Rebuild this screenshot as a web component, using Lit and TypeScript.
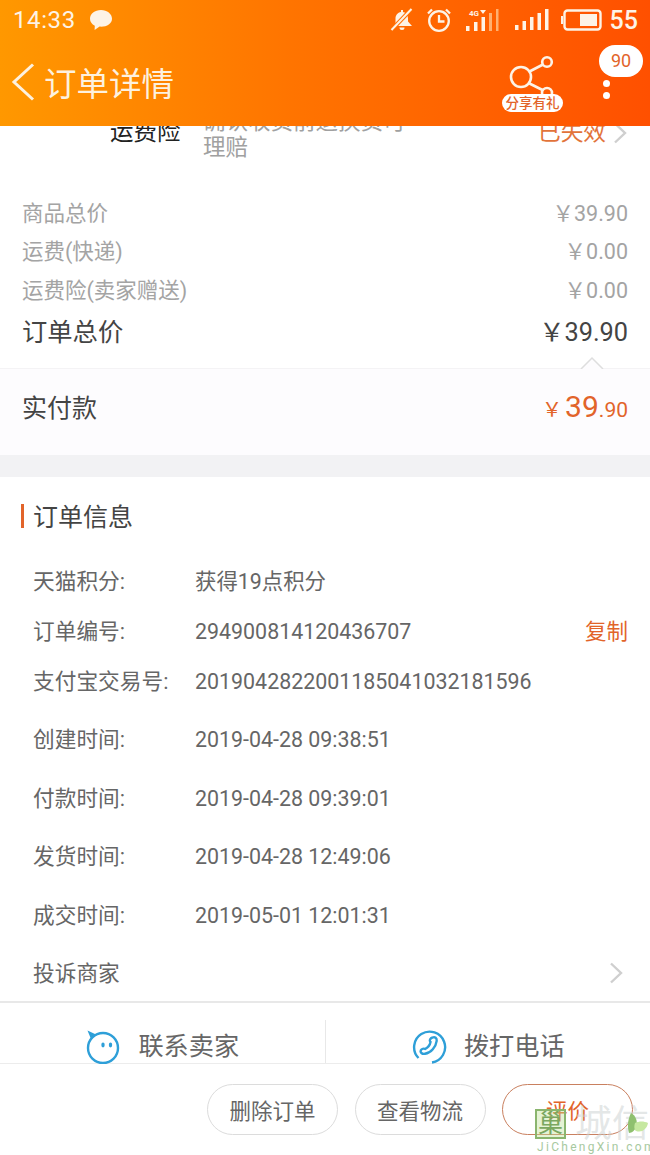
import { LitElement, html, css } from "lit";
import { customElement } from "lit/decorators.js";

const priceRows = [
  ["商品总价", "39.90"],
  ["运费(快递)", "0.00"],
  ["运费险(卖家赠送)", "0.00"],
];
const info = [
  ["天猫积分:", "获得19点积分", 50],
  ["订单编号:", "294900814120436707", 50],
  ["支付宝交易号:", "2019042822001185041032181596", 58],
  ["创建时间:", "2019-04-28 09:38:51", 59],
  ["付款时间:", "2019-04-28 09:39:01", 58],
  ["发货时间:", "2019-04-28 12:49:06", 59],
  ["成交时间:", "2019-05-01 12:01:31", 58],
];

@customElement("app-root")
export class AppRoot extends LitElement {
  static styles = css`
    :host { display: block; width: 650px; height: 1155px; font-family: Roboto, "Noto Sans CJK SC", sans-serif; background: #fff; overflow: hidden; position: relative; }
    .page { display: flex; flex-direction: column; height: 1155px; }
    header { height: 126px; flex: none; background: linear-gradient(90deg, #ff9800 0%, #ff7400 45%, #ff5000 100%); color: #fff; display: flex; flex-direction: column; position: relative; z-index: 1; }
    .status { height: 40px; display: flex; align-items: center; padding: 0 12px 0 13px; font-size: 24px; color: #fdf3e6; }
    .status .time { letter-spacing: .6px; }
    .status .bubble { margin-left: 13px; }
    .status .right { margin-left: auto; display: flex; align-items: center; }
    .status .batt { margin-left: 8px; font-size: 25px; font-weight: 500; }
    .nav { flex: 1; display: flex; align-items: flex-start; position: relative; padding-left: 11px; }
    .nav .back { margin-top: 23px; }
    .nav .title { font-size: 32.5px; line-height: 44px; margin-top: 23px; margin-left: 9px; color: #fdf1df; }
    .share { position: absolute; left: 502px; top: 15px; width: 62px; height: 58px; }
    .share .tag { position: absolute; left: 0; top: 39px; width: 61px; height: 18px; background: #fff; border-radius: 9px; color: #e2642a; font-size: 13.5px; line-height: 18px; text-align: center; white-space: nowrap; font-weight: 500; }
    .dots { position: absolute; left: 603px; top: 40px; display: flex; flex-direction: column; gap: 5px; }
    .dots i { width: 7px; height: 7px; background: #fff; border-radius: 50%; display: block; }
    .badge { position: absolute; left: 599px; top: 5px; width: 44px; height: 32px; background: #fff; border-radius: 16px; color: #e2642a; font-size: 18px; line-height: 32px; text-align: center; }
    main { flex: 1; overflow: hidden; min-height: 0; }
    .ins { height: 52px; margin-top: -15px; display: flex; align-items: flex-start; padding-left: 110px; position: relative; }
    .ins .k { color: #222; width: 93px; flex: none; padding-top: 8px; font-size: 23.5px; line-height: 27px; }
    .ins .v { color: #a0a0a0; width: 335px; flex: none; font-size: 22.5px; line-height: 26px; margin-top: -3px; white-space: nowrap; }
    .ins .s { color: #e2733a; padding-top: 8px; flex: none; white-space: nowrap; font-size: 22.700px; line-height: 27px; }
    .ins svg { margin-top: 11px; margin-left: 7px; flex: none; }
    .prices { padding: 29px 22px 0; }
    .pr { height: 38.5px; display: flex; justify-content: space-between; align-items: center; color: #a4a4a4; font-size: 21.500px; }
    .total { height: 46px; display: flex; justify-content: space-between; align-items: center; font-size: 25.300px; color: #444; margin-top: -1px; }
    .paidwrap { margin-top: 15.5px; height: 87px; background: #fdfcfe; border-top: 1px solid #f4f3f5; box-sizing: border-box; padding: 0 22px 12px; display: flex; justify-content: space-between; align-items: center; position: relative; font-size: 25px; color: #444; }
    .caret { position: absolute; left: 580px; top: -13px; width: 24px; height: 13px; overflow: hidden; }
    .caret svg { display: block; }
    .paid { color: #e2642a; display: flex; align-items: baseline; }
    .paid .y { font-size: 20px; margin-right: 3px; }
    .paid .b { font-size: 30px; }
    .paid .c { font-size: 21px; }
    .gap { height: 22px; background: #f2f2f4; }
    .heading { height: 75px; margin-left: 21px; display: flex; align-items: center; font-size: 25px; color: #444; }
    .heading::before { content: ""; width: 3px; height: 24px; background: #e2642a; margin: 3px 9px 0 0; }
    .info { padding: 14px 22px 0 33px; }
    .row { display: flex; align-items: flex-start; color: #666; }
    .row .l { width: 162px; font-size: 21.700px; line-height: 31px; }
    .row .val { font-size: 21.400px; line-height: 32px; }
    .row .val.cn { line-height: 31px; }
    .row .copy { margin-left: auto; color: #e2642a; font-size: 21.500px; line-height: 31px; }
    .complain { height: 45px; display: flex; align-items: flex-start; justify-content: space-between; font-size: 21.700px; line-height: 32px; color: #666; padding: 0 27px 0 33px; border-bottom: 2px solid #e8e8e8; box-sizing: border-box; }
    .complain svg { margin-top: 4px; }
    .contact { flex: none; height: 61px; display: flex; border-bottom: 1px solid #ececec; box-sizing: border-box; }
    .contact > div { flex: 1; display: flex; align-items: center; justify-content: center; gap: 17px; font-size: 25.200px; color: #666; padding-top: 28px; }
    .contact > div span { line-height: 1; }
    .contact .sep { flex: none; width: 1px; background: #e8e8e8; margin-top: 17px; padding: 0; }
    footer { flex: none; height: 91px; box-sizing: border-box; display: flex; justify-content: flex-end; gap: 16.5px; padding: 20px 17px 0 0; background: #fff; }
    .btn { width: 131px; height: 51px; box-sizing: border-box; border: 1px solid #dcdcdc; border-radius: 26px; display: flex; align-items: center; justify-content: center; font-size: 21.500px; color: #666; }
    .btn.hot { border-color: #c9805f; color: #e2642a; }
    .wm { position: absolute; left: 535px; top: 1105px; width: 115px; height: 50px; pointer-events: none; }
    .wm .box { position: absolute; left: 0; top: 4px; width: 31px; height: 30px; box-sizing: border-box; border: 2px solid #8ab56e; background: rgba(190, 225, 150, .4); color: #7aa860; font-size: 25px; line-height: 26px; text-align: center; overflow: hidden; }
    .wm .cn { position: absolute; left: 40px; top: 0; color: rgba(205, 210, 210, .55); font-size: 37px; line-height: 40px; white-space: nowrap; }
    .wm .en { position: absolute; left: 2px; top: 35px; color: #a7c9a0; font-size: 12px; letter-spacing: 2.300px; white-space: nowrap; line-height: 14px; }
    .wm .leaf { position: absolute; left: 92px; top: 8px; }
  `;

  render() {
    const chevron = html`<svg width="14" height="22" viewBox="0 0 14 22" fill="none" stroke="#cfcfcf" stroke-width="2.4"><path d="M2 1.5 12 11 2 20.5"/></svg>`;
    return html`<div class="page">
      <header>
        <div class="status">
          <span class="time">14:33</span>
          <svg class="bubble" width="24" height="22" viewBox="0 0 24 22"><path fill="#fdf3e6" d="M12 1C5.800 1 1 4.900 1 9.700c0 3 1.900 5.600 4.800 7.100L5.600 21l5-3.400c.5 0 .9.100 1.400.100 6.200 0 11-3.300 11-8S18.200 1 12 1z"/></svg>
          <div class="right">
            <svg width="24" height="24" viewBox="0 0 24 24" fill="#fdf3e6"><path d="M11 2h2v2.100c3.400.6 5 3.200 5 6.400v3L22 18H3.500l2-3v-4.500C5.500 7.300 7.600 4.700 11 4.100z"/><path d="M9.500 19.500h5a2.500 2.500 0 0 1-5 0z"/><path d="M21.500 1 1.500 22" stroke="#ff7000" stroke-width="4"/><path d="M21.500 1 1.500 22" stroke="#fdf3e6" stroke-width="2"/></svg>
            <svg style="margin-left:12px" width="26" height="26" viewBox="0 0 26 26" fill="none" stroke="#fdf3e6" stroke-width="2.300"><circle cx="13" cy="14" r="9.800"/><path d="M13 8v6.500h5.500M2 6.500 6 2.500M24 6.500l-4-4"/></svg>
            <svg style="margin-left:13px" width="34" height="24" viewBox="0 0 34 24"><text x="4" y="7.500" fill="#fdf3e6" font-size="8" font-family="Roboto" font-weight="700">4G</text><path fill="#fdf3e6" d="M15 2h6l-3 4z"/><g fill="#fdf3e6"><rect x="1" y="18" width="3.500" height="5"/><rect x="9" y="14" width="3.500" height="9"/><rect x="16.500" y="9" width="3.500" height="14"/></g><g fill="#ffb070"><rect x="24" y="5" width="3" height="18"/><rect x="31" y="1" width="2.500" height="22"/></g></svg>
            <svg style="margin-left:16px" width="34" height="22" viewBox="0 0 34 22" fill="#fdf3e6"><rect x="0" y="16" width="3.500" height="5"/><rect x="7.500" y="12" width="3.500" height="9"/><rect x="15" y="8" width="3.500" height="13"/><rect x="22.500" y="4" width="3.500" height="17"/><rect x="30" y="0" width="3.500" height="21"/></svg>
            <svg style="margin-left:12px" width="41" height="22" viewBox="0 0 41 22" fill="none"><rect x="3.500" y="1.500" width="36" height="19" rx="3" stroke="#fdf3e6" stroke-width="2.400"/><rect x="0" y="7" width="2" height="8" fill="#fdf3e6"/><rect x="19" y="5" width="17" height="12" fill="#fdf3e6"/></svg>
            <span class="batt">55</span>
          </div>
        </div>
        <div class="nav">
          <svg class="back" width="24" height="38" viewBox="0 0 24 38" fill="none" stroke="#fdf1df" stroke-width="3"><path d="M22 1.500 3 19l19 17.500"/></svg>
          <span class="title">订单详情</span>
          <div class="share">
            <svg width="62" height="44" viewBox="0 0 62 44" fill="none" stroke="#fdf3e6" stroke-width="2.600"><circle cx="19" cy="22" r="10"/><circle cx="45" cy="7" r="4.800"/><circle cx="45" cy="38" r="5"/><path d="M27.500 16.500 41 9.500M27.500 28.500 40.500 35"/></svg>
            <span class="tag">分享有礼</span>
          </div>
          <div class="dots"><i></i><i></i></div>
          <div class="badge">90</div>
        </div>
      </header>
      <main>
        <div class="ins">
          <span class="k">运费险</span>
          <span class="v">确认收货前退换货可<br />理赔</span>
          <span class="s">已失效</span>
          ${chevron}
        </div>
        <div class="prices">
          ${priceRows.map(([k, v]) => html`<div class="pr"><span>${k}</span><span>￥${v}</span></div>`)}
          <div class="total"><span>订单总价</span><span>￥39.90</span></div>
        </div>
        <div class="paidwrap">
          <div class="caret"><svg width="24" height="13" viewBox="0 0 24 13" fill="#fdfcfe" stroke="#dedede" stroke-width="1.500"><path d="M1 13 12 2l11 11"/></svg></div>
          <span>实付款</span>
          <span class="paid"><span class="y">￥</span><span class="b">39</span><span class="c">.90</span></span>
        </div>
        <div class="gap"></div>
        <div class="heading">订单信息</div>
        <div class="info">
          ${info.map(([l, v, h], i) => html`<div class="row" style="height:${h}px"><span class="l">${l}</span><span class="val ${i === 0 ? "cn" : ""}">${v}</span>${i === 1 ? html`<span class="copy">复制</span>` : ""}</div>`)}
        </div>
        <div class="complain"><span>投诉商家</span>${chevron}</div>
      </main>
      <div class="contact">
        <div>
          <svg width="36" height="36" viewBox="0 0 36 36" fill="none" stroke="#2e9fd8" stroke-width="2.400"><circle cx="18" cy="19" r="15"/><path fill="#2e9fd8" stroke="none" d="M2.500 1.500 11 5.500 6 10z"/><ellipse cx="18" cy="16" rx="1.700" ry="2.400" fill="#2e9fd8" stroke="none"/><ellipse cx="25.500" cy="16" rx="1.700" ry="2.400" fill="#2e9fd8" stroke="none"/></svg>
          <span>联系卖家</span>
        </div>
        <div class="sep"></div>
        <div>
          <svg width="36" height="36" viewBox="0 0 36 36" fill="none" stroke="#2e9fd8" stroke-width="2.400"><path d="M7.500 29A15.500 15.500 0 1 1 21 33.500"/><path d="M21.500 8.500c2.500-1 4.500.5 4.200 3.300-.8 6-5.700 12-11.700 13-3 .5-5.200-1.500-4.200-3.500.9-1.600 3-2 4.400-1.300 2.800-1.500 4.800-4.300 5.300-7-1.600-1.300-.3-3.800 2-4.500z"/></svg>
          <span>拨打电话</span>
        </div>
      </div>
      <footer>
        <div class="btn">删除订单</div>
        <div class="btn">查看物流</div>
        <div class="btn hot">评价</div>
      </footer>
    </div>
    <div class="wm">
      <span class="box">巢</span>
      <span class="cn">城信</span>
      <svg class="leaf" width="22" height="26" viewBox="0 0 22 26"><path fill="#8fc06f" d="M4 0c5 3 7 8 5 14-1 3-4 6-7 6C0 13 1 6 4 0z"/><path fill="#c6e8a0" d="M8 10c4-2 9-2 13 0-1 6-6 10-12 8-2-1-2-5-1-8z"/></svg>
      <span class="en">JiChengXin.com</span>
    </div>`;
  }
}
